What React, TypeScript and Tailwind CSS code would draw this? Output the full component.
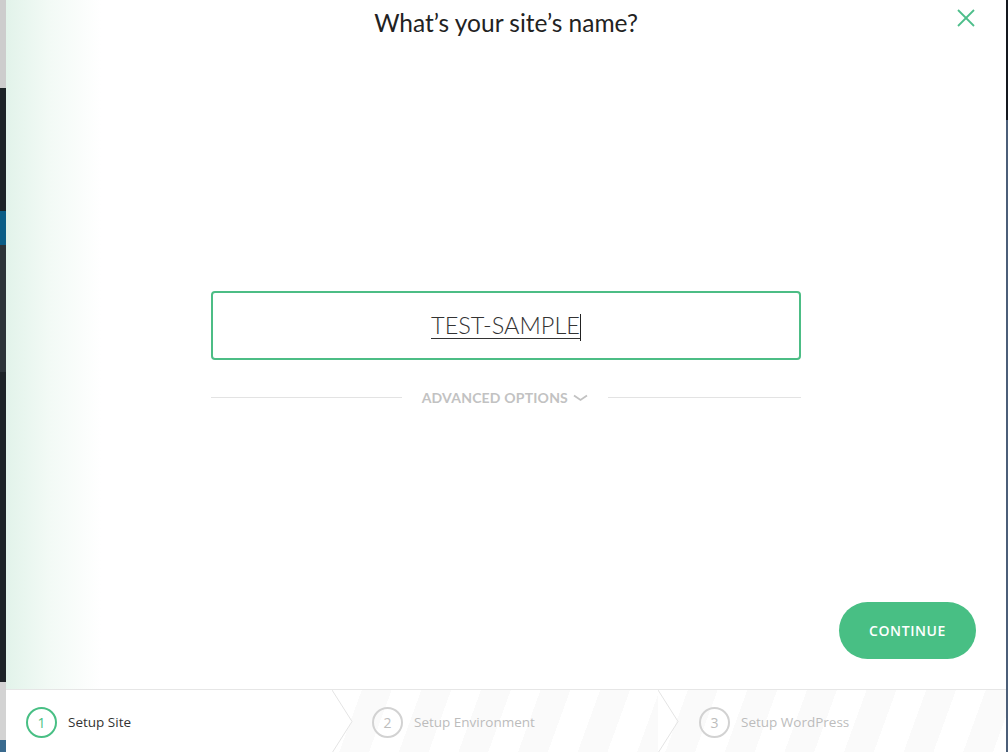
import React from "react";

function Chevron({ fill }: { fill: string }) {
  return (
    <svg
      className="absolute left-0 top-0"
      width="22"
      height="63"
      viewBox="0 0 22 63"
    >
      <polygon points="0,0 20,31.5 0,63" fill={fill} />
      <polyline points="0,0 20,31.5 0,63" fill="none" stroke="#e4e4e4" strokeWidth="1" />
    </svg>
  );
}

function Step({ n, label, active }: { n: number; label: string; active?: boolean }) {
  return (
    <div className="flex items-center gap-[11px]">
      <div
        className={
          active
            ? "flex h-[31px] w-[31px] items-center justify-center rounded-full border-2 border-[#48bf84] text-[14px] text-[#48bf84]"
            : "flex h-[31px] w-[31px] items-center justify-center rounded-full border-2 border-[#d2d2d2] text-[14px] text-[#bdbdbd]"
        }
      >
        {n}
      </div>
      <span className={active ? "text-[13.5px] text-[#333]" : "text-[13.5px] text-[#bcbcbc]"}>{label}</span>
    </div>
  );
}

export default function App() {
  return (
    <div
      className="flex h-[752px] w-[1008px] overflow-hidden bg-white"
      style={{ fontFamily: '"Open Sans", "Liberation Sans", sans-serif' }}
    >
      {/* background strip on the left */}
      <div className="flex w-[6px] flex-col">
        <div className="h-[88px] bg-[#cdcdcd]" />
        <div className="h-[123px] bg-[#1d2327]" />
        <div className="h-[34px] bg-[#0b5d86]" />
        <div className="h-[127px] bg-[#2c3338]" />
        <div className="h-[310px] bg-[#1d2327]" />
        <div className="h-[58px] bg-[#d3d3d3]" />
        <div className="flex-1 bg-[#3a6a8e]" />
      </div>

      {/* modal */}
      <div className="relative flex w-[1000px] flex-col">
        <div className="flex flex-1 flex-col bg-[linear-gradient(to_right,#e2f3ea,#f3faf6_45px,#ffffff_95px)]">
          <h1
            className="pt-[9px] text-center text-[24.5px] leading-[28px] text-[#222]"
            style={{ fontFamily: 'Lato, "Open Sans", sans-serif' }}
          >
            What’s your site’s name?
          </h1>

          <div className="mx-auto mt-[254px] flex h-[69px] w-[590px] items-center justify-center rounded-[4px] border-2 border-[#4cbd85] bg-white">
            <div className="flex items-end">
              <span
                className="border-b border-[#333] pt-[1px] text-[23.5px] font-light leading-[25px] text-[#333]"
                style={{ fontFamily: 'Lato, "Open Sans", sans-serif' }}
              >
                TEST-SAMPLE
              </span>
              <span className="mb-[-2px] h-[27px] w-px bg-[#222]" />
            </div>
          </div>

          <div className="mx-auto mt-[27px] flex w-[590px] items-center">
            <div className="h-px flex-1 bg-[#e3e3e3]" />
            <div
              className="mx-[20px] flex items-center gap-[5px] text-[14px] font-bold tracking-[0.2px] text-[#c2c2c2]"
              style={{ fontFamily: 'Lato, "Open Sans", sans-serif' }}
            >
              ADVANCED OPTIONS
              <svg width="15" height="8" viewBox="0 0 15 8">
                <polyline points="1,1.5 7.5,6 14,1.5" fill="none" stroke="#c2c2c2" strokeWidth="1.8" />
              </svg>
            </div>
            <div className="h-px w-[193px] bg-[#e3e3e3]" />
          </div>

          <button className="mr-[30px] mb-[30px] mt-auto h-[57px] w-[137px] self-end rounded-full bg-[#48bf84] text-[14px] font-semibold tracking-[0.6px] text-white">
            CONTINUE
          </button>
        </div>

        {/* close */}
        <button className="absolute right-[31px] top-[9px] h-[18px] w-[18px]">
          <svg width="18" height="18" viewBox="0 0 18 18">
            <line x1="1" y1="1" x2="17" y2="17" stroke="#4dbe8a" strokeWidth="1.8" />
            <line x1="17" y1="1" x2="1" y2="17" stroke="#4dbe8a" strokeWidth="1.8" />
          </svg>
        </button>

        {/* steps */}
        <div className="flex h-[63px] border-t border-[#e6e6e6]">
          <div className="flex w-[326px] items-center bg-white pl-[20px] pt-[3px]">
            <Step n={1} label="Setup Site" active />
          </div>
          <div className="relative flex w-[326px] items-center bg-[repeating-linear-gradient(110deg,#ffffff_0px,#ffffff_28px,#fafafa_28px,#fafafa_56px)] pl-[40px] pt-[3px]">
            <Chevron fill="#ffffff" />
            <Step n={2} label="Setup Environment" />
          </div>
          <div className="relative flex flex-1 items-center bg-[repeating-linear-gradient(110deg,#ffffff_0px,#ffffff_28px,#fafafa_28px,#fafafa_56px)] pl-[41px] pt-[3px]">
            <Chevron fill="none" />
            <Step n={3} label="Setup WordPress" />
          </div>
        </div>
      </div>

      {/* right strip */}
      <div className="flex w-[2px] flex-col">
        <div className="h-[120px] bg-[#14181f]" />
        <div className="flex-1 bg-[#4b5e78]" />
      </div>
    </div>
  );
}
